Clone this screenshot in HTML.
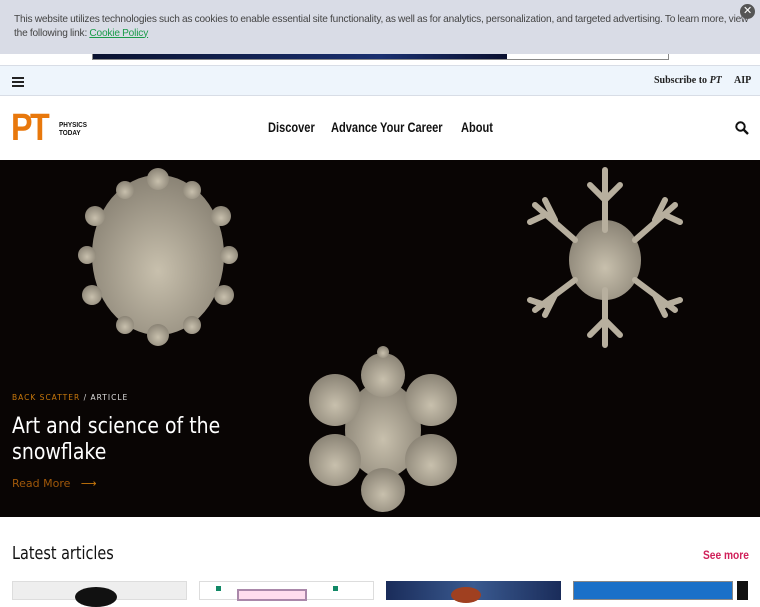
<!DOCTYPE html>
<html><head><meta charset="utf-8"><style>
*{margin:0;padding:0;box-sizing:border-box}
body{width:760px;height:600px;overflow:hidden;background:#fff;font-family:"Liberation Sans",sans-serif;position:relative}
.cookie{position:absolute;left:0;top:0;width:760px;height:54px;background:#d9dce6;font-size:10.5px;color:#444;padding:13px 0 0 14px;line-height:13.5px;z-index:5;letter-spacing:-0.18px;word-spacing:-0.4px;white-space:nowrap}
.cookie .t{display:inline-block;transform:scaleX(0.965);transform-origin:left}
.cookie a{color:#1a9c4a;text-decoration:underline}
.close{position:absolute;right:5px;top:4px;width:15px;height:15px;border-radius:50%;background:#555;color:#fff;font-size:11px;text-align:center;line-height:15px}
.ad{position:absolute;left:92px;top:54px;width:577px;height:6px;background:linear-gradient(90deg,#0a1230,#1a3070 50%,#0a1030 72%,#fff 72%);border:1px solid #888;border-top:none}
.util{position:absolute;top:65px;left:0;width:760px;height:31px;background:#eef5fc;border-top:1px solid #d8dde6;border-bottom:1px solid #d8dde6;font-family:"Liberation Serif",serif;font-weight:bold;font-size:10px;color:#222}
.burger{position:absolute;left:12px;top:11px;width:12px}
.burger i{display:block;height:2px;background:#222;margin-bottom:2px}
.hdr{position:absolute;top:96px;left:0;width:760px;height:64px}
.logo{position:absolute;left:11px;top:16px;color:#e8780c;font-weight:bold;font-size:38px;letter-spacing:-3px;line-height:32px;transform:scaleX(0.85);transform-origin:left}
.logot{position:absolute;left:59px;top:25px;font-size:7.5px;font-weight:bold;line-height:8px;color:#111;transform:scaleX(0.85);transform-origin:left}
.nav{position:absolute;top:24px;font-size:13.5px;font-weight:bold;color:#111;white-space:nowrap;transform:scaleX(0.82);transform-origin:left}
.hero{position:absolute;top:160px;left:0;width:760px;height:357px;background:#090504;overflow:hidden}
.h1{position:absolute;left:12px;top:254px;color:#fff;font-size:22px;line-height:26px;font-family:"DejaVu Sans",sans-serif;white-space:nowrap;transform:scaleX(0.86);transform-origin:left}
</style></head><body>
<div class="cookie"><span class="t">This website utilizes technologies such as cookies to enable essential site functionality, as well as for analytics, personalization, and targeted advertising. To learn more, view<br>the following link: <a>Cookie Policy</a></span><div class="close">✕</div></div>
<div class="ad"></div>
<div class="util"><div class="burger"><i></i><i></i><i></i></div>
<span style="position:absolute;left:654px;top:9px">Subscribe to <i>PT</i></span><span style="position:absolute;left:734px;top:9px">AIP</span></div>
<div class="hdr">
<div class="logo">PT</div><div class="logot">PHYSICS<br>TODAY</div>
<span class="nav" style="left:268px">Discover</span><span class="nav" style="left:331px">Advance Your Career</span><span class="nav" style="left:461px">About</span>
<svg style="position:absolute;left:735px;top:25px" width="14" height="14" viewBox="0 0 14 14"><circle cx="5.5" cy="5.5" r="4.2" fill="none" stroke="#111" stroke-width="2"/><path d="M8.5 8.5L13 13" stroke="#111" stroke-width="2.4"/></svg>
</div>
<div class="hero">
<svg width="760" height="357" style="position:absolute;left:0;top:0">
<defs><radialGradient id="g" cx="50%" cy="60%" r="60%"><stop offset="0" stop-color="#c8c0ad"/><stop offset="1" stop-color="#8a8375"/></radialGradient></defs>
<g fill="url(#g)">
<ellipse cx="158" cy="95" rx="66" ry="80"/>
<circle cx="158" cy="19" r="11"/><circle cx="158" cy="175" r="11"/>
<circle cx="95" cy="56" r="10"/><circle cx="221" cy="56" r="10"/><circle cx="92" cy="135" r="10"/><circle cx="224" cy="135" r="10"/>
<circle cx="125" cy="30" r="9"/><circle cx="192" cy="30" r="9"/><circle cx="125" cy="165" r="9"/><circle cx="192" cy="165" r="9"/>
<circle cx="87" cy="95" r="9"/><circle cx="229" cy="95" r="9"/>
<ellipse cx="605" cy="100" rx="36" ry="40"/>
<g stroke="#b7af9e" stroke-width="6" stroke-linecap="round">
<path d="M605 70V10M605 130V185M575 80L535 45M635 80L675 45M575 120L535 150M635 120L675 150M605 40L590 25M605 40L620 25M555 60L545 40M655 60L665 40M555 135L545 155M655 135L665 155M605 160L590 175M605 160L620 175M545 55L530 62M665 55L680 62M545 145L530 140M665 145L680 140"/>
</g>
<ellipse cx="383" cy="270" rx="38" ry="48"/>
<circle cx="383" cy="215" r="22"/><circle cx="383" cy="330" r="22"/>
<circle cx="335" cy="240" r="26"/><circle cx="431" cy="240" r="26"/><circle cx="335" cy="300" r="26"/><circle cx="431" cy="300" r="26"/>
<circle cx="383" cy="192" r="6"/>
</g></svg>
<div style="position:absolute;left:12px;top:233px;font-size:7.5px;letter-spacing:1px;color:#c8780c;font-family:'DejaVu Sans',sans-serif">BACK SCATTER <span style="color:#ddd">/ ARTICLE</span></div>
<div class="h1">Art and science of the<br>snowflake</div>
<div style="position:absolute;left:12px;top:317px;font-size:11px;color:#a0580a;font-family:'DejaVu Sans',sans-serif">Read More &nbsp; <span style="color:#c8780c">⟶</span></div>
</div>
<div style="position:absolute;left:12px;top:543px;font-size:18px;color:#111;font-family:'DejaVu Sans',sans-serif;white-space:nowrap;transform:scaleX(0.8);transform-origin:left">Latest articles</div>
<div style="position:absolute;left:703px;top:548px;font-size:12px;font-weight:bold;color:#d0205a;white-space:nowrap;transform:scaleX(0.85);transform-origin:left">See more</div>
<div style="position:absolute;left:12px;top:581px;width:175px;height:19px;border:1px solid #ddd;background:#eee"><div style="position:absolute;left:62px;top:5px;width:42px;height:20px;border-radius:50%;background:#111"></div></div>
<div style="position:absolute;left:199px;top:581px;width:175px;height:19px;border:1px solid #ddd;background:#fff"><div style="position:absolute;left:37px;top:7px;width:70px;height:12px;border:2px solid #a8a;background:#fde"></div><div style="position:absolute;left:16px;top:4px;width:5px;height:5px;background:#186"></div><div style="position:absolute;left:133px;top:4px;width:5px;height:5px;background:#186"></div></div>
<div style="position:absolute;left:386px;top:581px;width:175px;height:19px;background:linear-gradient(90deg,#1a2c5a,#3a5a90 50%,#1a2c5a)"><div style="position:absolute;left:65px;top:6px;width:30px;height:16px;border-radius:50%;background:#a04020"></div></div>
<div style="position:absolute;left:573px;top:581px;width:160px;height:19px;background:#1a70c8;border:1px solid #888"></div>
<div style="position:absolute;left:737px;top:581px;width:11px;height:19px;background:#111"></div>
</body></html>
